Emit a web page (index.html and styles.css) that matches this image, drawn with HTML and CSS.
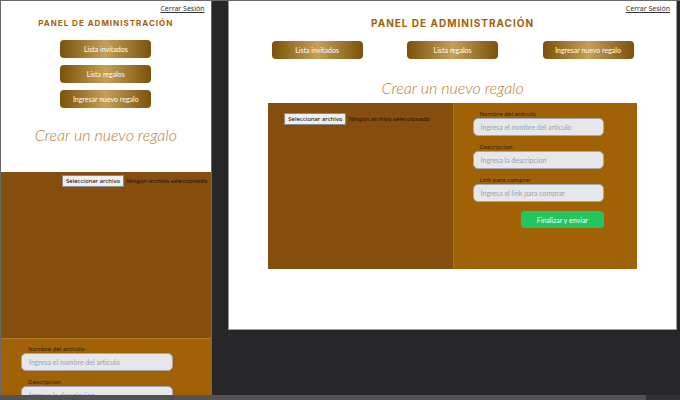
FILE: index.html
```html
<!DOCTYPE html>
<html lang="es">
<head>
<meta charset="utf-8">
<meta name="viewport" content="width=device-width, initial-scale=1">
<title>Panel de administración</title>
<link rel="stylesheet" href="styles.css">
</head>
<body>
<main class="canvas">
  <section class="frame frame-mobile">
    <header class="top"><a class="logout" href="#">Cerrar Sesión</a></header>
    <h1 class="title">PANEL DE ADMINISTRACIÓN</h1>
    <nav class="actions">
      <button class="gold" type="button">Lista invitados</button>
      <button class="gold" type="button">Lista regalos</button>
      <button class="gold" type="button">Ingresar nuevo regalo</button>
    </nav>
    <h2 class="script">Crear un nuevo regalo</h2>
    <form class="gift">
      <div class="photo">
        <label class="file"><input type="file"><span class="file-button">Seleccionar archivo</span><span class="file-name">Ningún archivo seleccionado</span></label>
      </div>
      <div class="fields">
        <div class="field"><label for="m-name">Nombre del articulo</label><input id="m-name" type="text" placeholder="Ingresa el nombre del articulo"></div>
        <div class="field"><label for="m-desc">Descripcion</label><input id="m-desc" type="text" placeholder="Ingresa la descripcion"></div>
      </div>
    </form>
  </section>
  <section class="frame frame-desktop">
    <header class="top"><a class="logout" href="#">Cerrar Sesión</a></header>
    <h1 class="title">PANEL DE ADMINISTRACIÓN</h1>
    <nav class="actions">
      <button class="gold" type="button">Lista invitados</button>
      <button class="gold" type="button">Lista regalos</button>
      <button class="gold" type="button">Ingresar nuevo regalo</button>
    </nav>
    <h2 class="script">Crear un nuevo regalo</h2>
    <form class="gift">
      <div class="photo">
        <label class="file"><input type="file"><span class="file-button">Seleccionar archivo</span><span class="file-name">Ningún archivo seleccionado</span></label>
      </div>
      <div class="fields">
        <div class="field"><label for="d-name">Nombre del articulo</label><input id="d-name" type="text" placeholder="Ingresa el nombre del articulo"></div>
        <div class="field"><label for="d-desc">Descripcion</label><input id="d-desc" type="text" placeholder="Ingresa la descripcion"></div>
        <div class="field"><label for="d-link">Link para comprar</label><input id="d-link" type="text" placeholder="Ingresa el link para comprar"></div>
        <button class="send" type="submit">Finalizar y enviar</button>
      </div>
    </form>
  </section>
</main>
<div class="scrollbar"><div class="thumb"></div></div>
</body>
</html>
```

FILE: styles.css
```css
* {
  box-sizing: border-box;
}

body {
  margin: 0;
  height: 100vh;
  display: flex;
  flex-direction: column;
  overflow: hidden;
  background: #272729;
  font-family: Lato, "Open Sans", sans-serif;
  font-size: 7px;
}

button,
input {
  font: inherit;
}

.canvas {
  flex: 1;
  min-height: 0;
  display: flex;
  justify-content: space-between;
  align-items: flex-start;
  padding-right: 3px;
  border-top: 1px solid #69696b;
  overflow: hidden;
}

.frame {
  background: #fff;
  overflow: hidden;
}

.frame-mobile {
  width: 31.25%;
  border-left: 1px solid #69696b;
  border-right: 1px solid #69696b;
}

.frame-desktop {
  width: 66.3%;
  padding-bottom: 60px;
  border: 1px solid #9a9a9a;
  border-top: 0;
}

.top {
  display: flex;
  justify-content: flex-end;
  padding: 3px 6px 0;
}

.logout {
  color: #333;
  font-family: "Noto Sans", sans-serif;
  line-height: 10px;
}

.title {
  margin: 0;
  padding-top: 3px;
  color: #a16207;
  font-family: Inter, sans-serif;
  font-weight: 700;
  line-height: 12px;
  letter-spacing: 1px;
  text-align: center;
}

.frame-mobile .title {
  font-size: 8px;
}

.frame-desktop .title {
  font-size: 10px;
}

.actions {
  display: flex;
}

.frame-mobile .actions {
  flex-direction: column;
  align-items: center;
  gap: 7px;
  padding-top: 11px;
}

.frame-desktop .actions {
  width: 81%;
  margin: 0 auto;
  justify-content: space-between;
  padding-top: 12px;
}

.gold {
  width: 91px;
  height: 18px;
  padding: 0;
  border: 0;
  border-radius: 4px;
  color: #fff;
  background: linear-gradient(90deg, #7a5209, #c6a057 50%, #7a5209);
}

.script {
  margin: 0;
  color: #b5802f;
  font-family: Lato, cursive;
  font-size: 16px;
  font-style: italic;
  font-weight: 300;
  text-align: center;
}

.frame-mobile .script {
  padding: 14px 0 24px;
  line-height: 26px;
}

.frame-desktop .script {
  padding-top: 14px;
  line-height: 30px;
}

.photo {
  min-height: 166px;
  background: #854d0e;
}

.fields {
  background: #a16207;
}

.frame-mobile .photo {
  padding: 3px 0 0 61px;
}

.frame-mobile .fields {
  padding: 7px 38px 20px 20px;
  border-top: 1px solid #b07a2c;
}

.frame-desktop .gift {
  display: grid;
  grid-template-columns: 1fr 1fr;
  width: 82.5%;
  margin: 0 auto;
}

.frame-desktop .photo {
  padding: 10px 0 0 16px;
}

.frame-desktop .fields {
  display: flex;
  flex-direction: column;
  padding: 8px 33px 0 19px;
  border-left: 1px solid #aa7020;
}

.file {
  display: flex;
  align-items: center;
  gap: 2px;
  font-family: "Noto Sans", sans-serif;
  font-size: 6px;
  white-space: nowrap;
}

.file input {
  position: absolute;
  width: 1px;
  height: 1px;
  opacity: 0;
}

.file-button {
  height: 12px;
  padding: 0 3px;
  border: 1px solid #8a8a8a;
  line-height: 10px;
  background: #efefef;
  color: #000;
}

.file-name {
  color: #1c1003;
}

.field {
  display: flex;
  flex-direction: column;
  margin-bottom: 8px;
}

.field label {
  padding-left: 7px;
  font-family: "Noto Sans", sans-serif;
  font-size: 6px;
  line-height: 7px;
  color: #2b1a02;
}

.field input {
  width: 100%;
  height: 18px;
  padding: 0 7px;
  border: 1px solid #a3a7b0;
  border-radius: 5px;
  background: #e5e7eb;
  color: #1f2937;
}

.field input::placeholder {
  color: #9ca3af;
  opacity: 1;
}

.send {
  align-self: flex-end;
  width: 83px;
  height: 17px;
  margin-top: 1px;
  padding: 0;
  border: 0;
  border-radius: 4px;
  background: #22c55e;
  color: #fff;
}

.scrollbar {
  height: 5px;
  background: #303032;
}

.thumb {
  width: 95%;
  height: 100%;
  background: #525254;
}
```
